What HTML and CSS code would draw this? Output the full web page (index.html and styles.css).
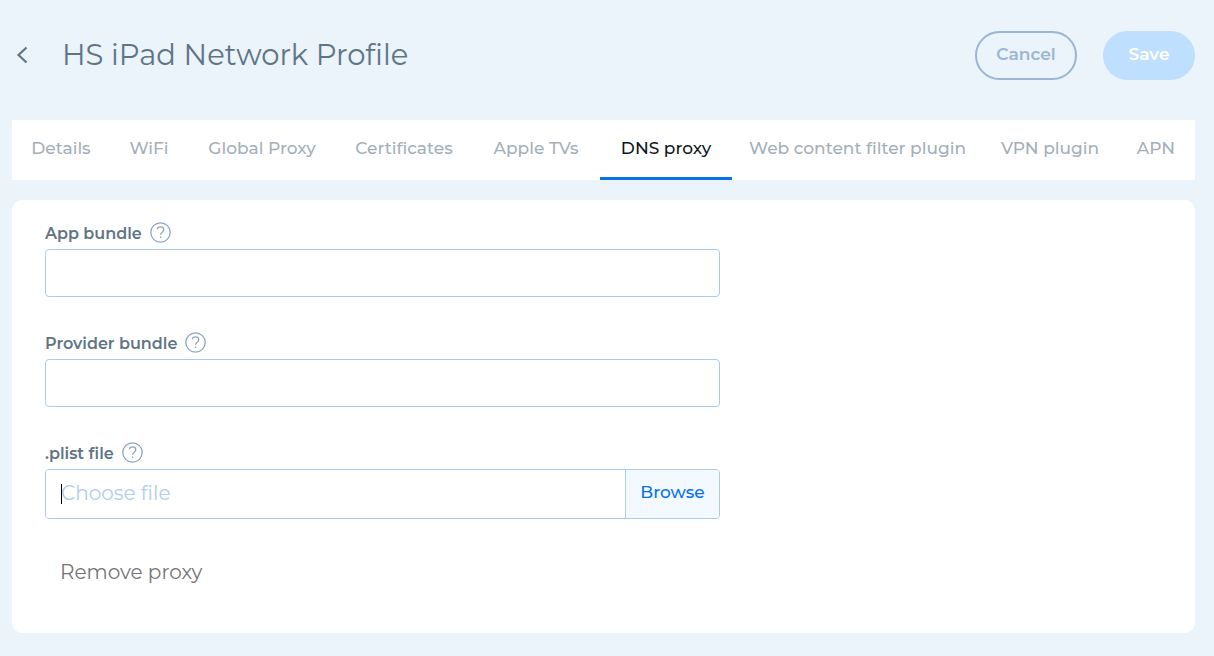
FILE: index.html
```html
<!DOCTYPE html>
<html lang="en">
<head>
<meta charset="utf-8">
<meta name="viewport" content="width=device-width, initial-scale=1">
<title>HS iPad Network Profile</title>
<link rel="stylesheet" href="styles.css">
</head>
<body>
<header class="header">
  <button class="back" type="button" aria-label="Back">
    <svg width="12" height="18" viewBox="0 0 12 18" fill="none" stroke="currentColor" stroke-width="2.200"><path d="M10.500 1.500 2.500 9l8 7.500"/></svg>
  </button>
  <h1 class="title">HS iPad Network Profile</h1>
  <button class="btn btn-outline" type="button">Cancel</button>
  <button class="btn btn-solid" type="button">Save</button>
</header>
<main class="main">
  <nav class="tabs">
    <a class="tab" href="#details">Details</a>
    <a class="tab" href="#wifi">WiFi</a>
    <a class="tab" href="#global-proxy">Global Proxy</a>
    <a class="tab" href="#certificates">Certificates</a>
    <a class="tab" href="#apple-tvs">Apple TVs</a>
    <a class="tab active" href="#dns-proxy" aria-current="page">DNS proxy</a>
    <a class="tab" href="#web-filter">Web content filter plugin</a>
    <a class="tab" href="#vpn">VPN plugin</a>
    <a class="tab" href="#apn">APN</a>
  </nav>
  <form class="card">
    <div class="field">
      <div class="label-row">
        <label for="app-bundle">App bundle</label>
        <svg class="help" viewBox="0 0 21 21"><circle cx="10.500" cy="10.500" r="9.700"/><path d="M7.200 7.200C7.600 5.700 8.900 4.900 10.500 4.900c2 0 3.300 1.100 3.300 2.800 0 2.500-3.200 2.500-3.200 5.100M10.600 14.600v1.500"/></svg>
      </div>
      <input class="text-input" id="app-bundle" type="text">
    </div>
    <div class="field">
      <div class="label-row">
        <label for="provider-bundle">Provider bundle</label>
        <svg class="help" viewBox="0 0 21 21"><circle cx="10.500" cy="10.500" r="9.700"/><path d="M7.200 7.200C7.600 5.700 8.900 4.900 10.500 4.900c2 0 3.300 1.100 3.300 2.800 0 2.500-3.200 2.500-3.200 5.100M10.600 14.600v1.500"/></svg>
      </div>
      <input class="text-input" id="provider-bundle" type="text">
    </div>
    <div class="field">
      <div class="label-row">
        <label for="plist-file">.plist file</label>
        <svg class="help" viewBox="0 0 21 21"><circle cx="10.500" cy="10.500" r="9.700"/><path d="M7.200 7.200C7.600 5.700 8.900 4.900 10.500 4.900c2 0 3.300 1.100 3.300 2.800 0 2.500-3.200 2.500-3.200 5.100M10.600 14.600v1.500"/></svg>
      </div>
      <div class="file-group">
        <input class="file-input" id="plist-file" type="text" placeholder="Choose file">
        <span class="caret"></span>
        <button class="browse" type="button">Browse</button>
      </div>
    </div>
    <button class="remove" type="button">Remove proxy</button>
  </form>
</main>
</body>
</html>
```
FILE: styles.css
```css
* { box-sizing: border-box; }

body {
  margin: 0;
  min-height: 100vh;
  background: #ebf3fb;
  color: #5f7585;
  font-family: Metropolis, Montserrat, Inter, sans-serif;
}

button, input { font: inherit; }
button { cursor: pointer; }

.header {
  display: flex;
  align-items: center;
  padding: 30px 19px 40px 12px;
}

.back {
  display: flex;
  margin-right: 34px;
  padding: 0 0 0 4px;
  border: 0;
  background: none;
  color: #5f7585;
}

.title {
  flex: 1;
  margin: 0;
  font-size: 29px;
  line-height: 50px;
  font-weight: 400;
}

.btn {
  height: 49px;
  padding: 0 20px 2px;
  border: 2px solid #9bb6d2;
  border-radius: 25px;
  font-size: 17px;
  font-weight: 600;
}

.btn-outline {
  min-width: 102px;
  padding: 0 19px 2px;
  background: transparent;
  color: #9bb6d2;
}

.btn-solid {
  min-width: 92px;
  margin-left: 26px;
  border-color: #bfdffe;
  background: #bfdffe;
  color: #fff;
}

.main { padding: 0 19px 23px 12px; }

.tabs {
  display: grid;
  grid-template-columns: 98fr 78fr 148fr 136fr 128fr 132fr 251fr 134fr 78fr;
  background: #fff;
}

.tab {
  padding: 16px 0 17px;
  border-bottom: 3px solid transparent;
  color: #a5afb9;
  font-size: 17px;
  line-height: 24px;
  font-weight: 500;
  text-align: center;
  text-decoration: none;
  white-space: nowrap;
}

.tab.active {
  border-color: #0672e6;
  color: #111820;
}

.card {
  margin-top: 20px;
  padding: 21px 33px 43px;
  border-radius: 10px;
  background: #fff;
}

.field {
  max-width: 675px;
  margin-bottom: 34px;
}

.label-row {
  display: flex;
  align-items: center;
  gap: 8px;
  height: 28px;
  padding-bottom: 6px;
  font-size: 16px;
  font-weight: 600;
}

.label-row label { padding-top: 2px; }

.help {
  width: 21px;
  height: 21px;
  fill: none;
  stroke: #8da6c2;
  stroke-width: 1.3;
}

.text-input {
  display: block;
  width: 100%;
  height: 48px;
  padding: 0 15px;
  border: 1px solid #adcbe9;
  border-radius: 4px;
  background: #fff;
  font-size: 20px;
}

.file-group {
  position: relative;
  display: flex;
  height: 50px;
  overflow: hidden;
  border: 1px solid #adcbe9;
  border-radius: 4px;
}

.file-input {
  flex: 1;
  min-width: 0;
  padding: 0 15px 2px;
  border: 0;
  background: #fff;
  font-size: 20px;
}

.file-input::placeholder { color: #b0cdec; opacity: 1; }

.caret {
  position: absolute;
  top: 14px;
  left: 15px;
  width: 1px;
  height: 20px;
  background: #000;
}

.browse {
  width: 94px;
  padding: 0 0 4px;
  border: 0;
  border-left: 1px solid #adcbe9;
  background: #f2f9ff;
  color: #0672e6;
  font-size: 17px;
  font-weight: 500;
}

.remove {
  display: block;
  padding: 7px 15px 6px;
  border: 0;
  background: none;
  color: #757575;
  font-size: 20px;
  line-height: 24px;
}
```
